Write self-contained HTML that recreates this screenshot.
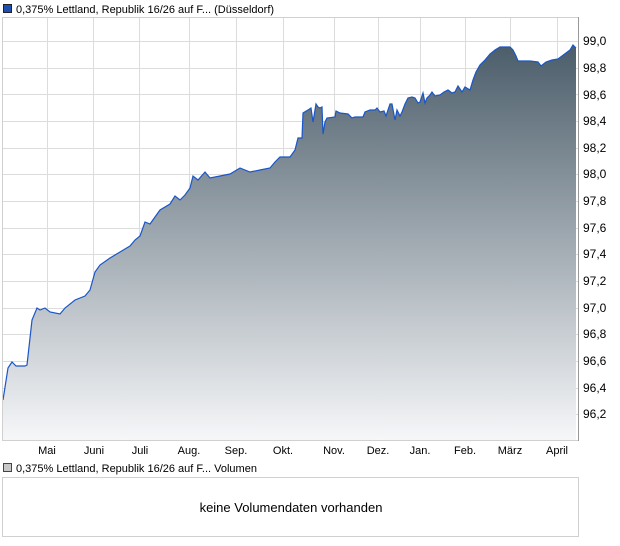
<!DOCTYPE html><html><head><style>
body{margin:0;background:#fff;font-family:"Liberation Sans",sans-serif;width:620px;height:546px;overflow:hidden;position:relative}
</style></head><body>
<svg width="620" height="546" style="position:absolute;left:0;top:0" font-family="Liberation Sans, sans-serif" font-size="11">
<defs><linearGradient id="grd" x1="0" y1="44" x2="0" y2="440" gradientUnits="userSpaceOnUse">
<stop offset="0" stop-color="#4b5d6a"/><stop offset="1" stop-color="#f6f7f9"/></linearGradient></defs>
<rect x="3.5" y="4.5" width="8" height="8" fill="#1f4fb0" stroke="#222" stroke-width="1"/>
<text x="16" y="13">0,375% Lettland, Republik 16/26 auf F... (Düsseldorf)</text>
<g stroke="#dcdcdc" stroke-width="1">
<line x1="2" y1="41.5" x2="578" y2="41.5"/><line x1="2" y1="68.5" x2="578" y2="68.5"/><line x1="2" y1="94.5" x2="578" y2="94.5"/><line x1="2" y1="121.5" x2="578" y2="121.5"/><line x1="2" y1="148.5" x2="578" y2="148.5"/><line x1="2" y1="174.5" x2="578" y2="174.5"/><line x1="2" y1="201.5" x2="578" y2="201.5"/><line x1="2" y1="228.5" x2="578" y2="228.5"/><line x1="2" y1="254.5" x2="578" y2="254.5"/><line x1="2" y1="281.5" x2="578" y2="281.5"/><line x1="2" y1="308.5" x2="578" y2="308.5"/><line x1="2" y1="334.5" x2="578" y2="334.5"/><line x1="2" y1="361.5" x2="578" y2="361.5"/><line x1="2" y1="388.5" x2="578" y2="388.5"/><line x1="2" y1="414.5" x2="578" y2="414.5"/>
<line x1="47.5" y1="17" x2="47.5" y2="440"/><line x1="93.5" y1="17" x2="93.5" y2="440"/><line x1="139.5" y1="17" x2="139.5" y2="440"/><line x1="189.5" y1="17" x2="189.5" y2="440"/><line x1="236.5" y1="17" x2="236.5" y2="440"/><line x1="283.5" y1="17" x2="283.5" y2="440"/><line x1="334.5" y1="17" x2="334.5" y2="440"/><line x1="378.5" y1="17" x2="378.5" y2="440"/><line x1="420.5" y1="17" x2="420.5" y2="440"/><line x1="465.5" y1="17" x2="465.5" y2="440"/><line x1="510.5" y1="17" x2="510.5" y2="440"/><line x1="557.5" y1="17" x2="557.5" y2="440"/>
</g>
<path d="M3,400 L8,368 L12,362 L16,366 L25,366 L27,365 L32,320 L37,308 L40,310 L45,308 L50,312 L60,314 L65,308 L75,300 L85,296 L90,290 L95,272 L100,265 L110,258 L120,252 L130,246 L135,240 L140,236 L145,222 L150,224 L160,210 L170,204 L175,196 L180,200 L185,195 L190,188 L193,176 L198,180 L205,172 L210,178 L220,176 L230,174 L240,168 L250,172 L260,170 L270,168 L275,162 L280,157 L290,157 L295,150 L298,138 L302,138 L303,113 L308,110 L311,108 L313,122 L316,104 L318,107 L320,108 L322,107 L323,134 L325,122 L327,118 L335,117 L336,111 L340,113 L348,114 L352,118 L355,117 L363,117 L365,112 L370,110 L375,110 L377,108 L380,112 L384,111 L386,116 L390,104 L392,104 L395,120 L397,110 L400,116 L402,112 L405,104 L408,98 L412,97 L415,98 L418,103 L420,102 L423,93 L425,103 L427,98 L430,95 L432,92 L435,96 L440,95 L444,92 L448,90 L452,93 L455,92 L458,86 L462,92 L465,87 L470,90 L473,80 L476,72 L480,65 L485,60 L490,54 L495,50 L500,47 L510,47 L513,50 L516,56 L518,61 L530,61 L538,62 L541,66 L546,62 L552,60 L558,59 L562,56 L566,53 L570,50 L573,45 L576,48 L576,440 L3,440 Z" fill="url(#grd)" stroke="none"/>
<path d="M3,400 L8,368 L12,362 L16,366 L25,366 L27,365 L32,320 L37,308 L40,310 L45,308 L50,312 L60,314 L65,308 L75,300 L85,296 L90,290 L95,272 L100,265 L110,258 L120,252 L130,246 L135,240 L140,236 L145,222 L150,224 L160,210 L170,204 L175,196 L180,200 L185,195 L190,188 L193,176 L198,180 L205,172 L210,178 L220,176 L230,174 L240,168 L250,172 L260,170 L270,168 L275,162 L280,157 L290,157 L295,150 L298,138 L302,138 L303,113 L308,110 L311,108 L313,122 L316,104 L318,107 L320,108 L322,107 L323,134 L325,122 L327,118 L335,117 L336,111 L340,113 L348,114 L352,118 L355,117 L363,117 L365,112 L370,110 L375,110 L377,108 L380,112 L384,111 L386,116 L390,104 L392,104 L395,120 L397,110 L400,116 L402,112 L405,104 L408,98 L412,97 L415,98 L418,103 L420,102 L423,93 L425,103 L427,98 L430,95 L432,92 L435,96 L440,95 L444,92 L448,90 L452,93 L455,92 L458,86 L462,92 L465,87 L470,90 L473,80 L476,72 L480,65 L485,60 L490,54 L495,50 L500,47 L510,47 L513,50 L516,56 L518,61 L530,61 L538,62 L541,66 L546,62 L552,60 L558,59 L562,56 L566,53 L570,50 L573,45 L576,48" fill="none" stroke="#1a56c8" stroke-width="1.2"/>
<rect x="2.5" y="17.5" width="576" height="423" fill="none" stroke="#d0d0d0"/>
<line x1="578.5" y1="17" x2="578.5" y2="441" stroke="#999"/>
<g font-size="12">
<text x="583" y="45">99,0</text><text x="583" y="72">98,8</text><text x="583" y="99">98,6</text><text x="583" y="125">98,4</text><text x="583" y="152">98,2</text><text x="583" y="178">98,0</text><text x="583" y="205">97,8</text><text x="583" y="232">97,6</text><text x="583" y="258">97,4</text><text x="583" y="285">97,2</text><text x="583" y="312">97,0</text><text x="583" y="338">96,8</text><text x="583" y="365">96,6</text><text x="583" y="392">96,4</text><text x="583" y="418">96,2</text>
</g>
<g font-size="11" text-anchor="middle">
<text x="47" y="454">Mai</text><text x="94" y="454">Juni</text><text x="140" y="454">Juli</text><text x="189" y="454">Aug.</text><text x="236" y="454">Sep.</text><text x="283" y="454">Okt.</text><text x="334" y="454">Nov.</text><text x="378" y="454">Dez.</text><text x="420" y="454">Jan.</text><text x="465" y="454">Feb.</text><text x="510" y="454">März</text><text x="557" y="454">April</text>
</g>
<rect x="3.5" y="463.5" width="8" height="8" fill="#c8c8c8" stroke="#444"/>
<text x="16" y="472">0,375% Lettland, Republik 16/26 auf F... Volumen</text>
<rect x="2.5" y="477.5" width="576" height="59" fill="#fff" stroke="#d0d0d0"/>
<text x="291" y="512" text-anchor="middle" font-size="13">keine Volumendaten vorhanden</text>
</svg>
</body></html>
